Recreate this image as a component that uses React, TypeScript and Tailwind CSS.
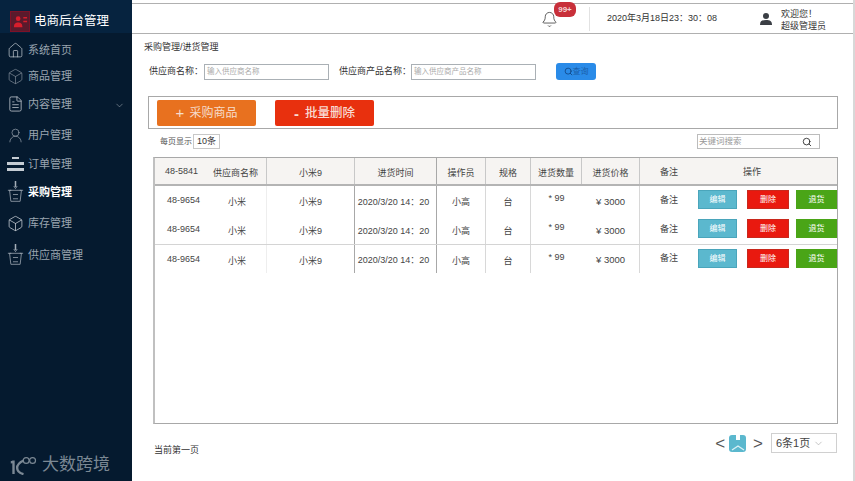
import { Bell, Search, ChevronDown, Box, House, FileText, UserRound } from 'lucide-react';
import type { ReactNode } from 'react';

const font = "font-['Liberation_Sans','Noto_Sans_CJK_SC',sans-serif]";

function TrayIcon({ className = '' }: { className?: string }) {
  return (
    <svg viewBox="0 0 20 26" className={className} fill="none" stroke="currentColor" strokeWidth="0.9">
      <path d="M3 11h14l-1.5 13h-11z" />
      <path d="M1 11h4M15 11h4M7 16h6M7 21h6" />
      <path d="M10 0v7" strokeWidth="1.8" />
      <path d="M8 6l2 3 2-3" />
    </svg>
  );
}

function BarsIcon() {
  return (
    <div className="flex w-[17px] flex-col gap-[3px]">
      <div className="mx-auto h-[2px] w-[7px] bg-[#c5ccd3]" />
      <div className="h-[3px] w-full bg-[#c5ccd3]" />
      <div className="h-[3px] w-full bg-[#c5ccd3]" />
    </div>
  );
}

const menu: { label: string; icon: ReactNode; h: string; active?: boolean; arrow?: boolean }[] = [
  { label: '系统首页', icon: <House className="h-[21px] w-[20px]" strokeWidth={1} />, h: 'h-[26px]' },
  { label: '商品管理', icon: <Box className="h-[19px] w-[19px] text-[#7f8b97]" strokeWidth={1} />, h: 'h-[26px]' },
  { label: '内容管理', icon: <FileText className="h-[20px] w-[19px]" strokeWidth={1.1} />, h: 'h-[30px]', arrow: true },
  { label: '用户管理', icon: <UserRound className="h-[21px] w-[21px] text-[#a5afb9]" strokeWidth={0.9} />, h: 'h-[32px]' },
  { label: '订单管理', icon: <BarsIcon />, h: 'h-[26px]' },
  { label: '采购管理', icon: <TrayIcon className="h-[22px] w-[17px] text-[#a5afb9]" />, h: 'h-[30px]', active: true },
  { label: '库存管理', icon: <Box className="h-[19px] w-[19px]" strokeWidth={1.1} />, h: 'h-[32px]' },
  { label: '供应商管理', icon: <TrayIcon className="h-[22px] w-[17px] text-[#a5afb9]" />, h: 'h-[32px]' },
];

const cols = 'grid grid-cols-[50px_62px_88px_82px_49px_45px_51px_58px_58px_1fr]';
const rowLine = 'border-r border-[#c8c8c8]';

function Row({ border }: { border?: boolean }) {
  return (
    <div className={`${cols} h-[29px] items-stretch text-[9px] text-[#444] ${border ? 'border-t border-[#d4d4d4]' : ''}`}>
      <div className="pt-[8px] pl-[12px] text-[9px]">48-9654</div>
      <div className="flex items-center justify-center border-r border-[#eeeeee] pt-[5px] pl-[3px]">小米</div>
      <div className="flex items-center justify-center border-r border-[#a8a8a8] pt-[5px]">小米9</div>
      <div className="flex items-center justify-center border-r border-[#a8a8a8] pt-[4px] pr-[4px] text-[9px]">2020/3/20 14：20</div>
      <div className="flex items-center justify-center border-r border-[#d8d8d8] pt-[5px]">小高</div>
      <div className="flex items-center justify-center border-r border-[#d8d8d8] pt-[5px]">台</div>
      <div className="pt-[6px] text-center">* 99</div>
      <div className="flex items-center justify-center border-r border-[#d8d8d8] pt-[3px] text-[9.5px]">¥ 3000</div>
      <div className="flex items-center justify-center text-[9px]">备注</div>
      <div className="flex items-start gap-[10px] pt-[4px] text-[8px] text-white">
        <button className="h-[19px] w-[39px] border border-[#4aa5bb] bg-[#5bb8ce]">编辑</button>
        <button className="h-[19px] w-[42px] border border-[#c9281c] bg-[#e9190f]">删除</button>
        <button className="ml-[-3px] h-[19px] flex-1 bg-[#4aa517]">退货</button>
      </div>
    </div>
  );
}

export default function App() {
  return (
    <div className={`flex h-[481px] w-[855px] overflow-hidden bg-white ${font}`}>
      <aside className="flex w-[132px] shrink-0 flex-col bg-[#051a2f] text-[11px] text-[#9aa5b0]">
        <div className="flex h-[33px] items-center gap-[4px] bg-[#06233f] pt-[10px] pl-[10px] text-[12.5px] text-white">
          <div className="flex h-[21px] w-[20px] items-center justify-center border border-[#7d1228] bg-[#5a1a2c]">
            <svg viewBox="0 0 16 16" className="h-[15px] w-[15px]">
              <circle cx="5.5" cy="5" r="2.5" fill="#d81e2c" />
              <path d="M1 14c0-4 2-5 4.5-5S10 10 10 14z" fill="#d81e2c" />
              <path d="M11 4h4M11 8h4" stroke="#d81e2c" strokeWidth="1.5" />
            </svg>
          </div>
          电商后台管理
        </div>
        <nav className="mt-[4px] flex flex-col">
          {menu.map((m) => (
            <div key={m.label} className={`${m.h} flex items-center gap-[3px] pl-[7px] ${m.active ? 'font-bold text-white' : ''}`}>
              <span className="flex w-[17px] justify-center text-[#c5ccd3]">{m.icon}</span>
              <span className="ml-[1px]">{m.label}</span>
              {m.arrow && <ChevronDown className="mt-[3px] ml-auto mr-[7px] h-[11px] w-[11px] text-[#c5ccd3]" strokeWidth={1} />}
            </div>
          ))}
        </nav>
        <div className="mt-auto flex items-center gap-[4px] pb-[5px] pl-[9px] text-[17px] leading-[22px] text-[#7b8894]">
          <svg viewBox="0 0 30 22" className="h-[20px] w-[29px]" fill="none" stroke="currentColor">
            <path d="M1 8c2 0 3-1 3-2v15" strokeWidth="2.6" />
            <path d="M15 6c-4 2-7 5-7 8 0 4 3 6 7 7" strokeWidth="2.6" />
            <circle cx="18" cy="6" r="3.2" strokeWidth="1.3" />
            <circle cx="25" cy="6" r="3.2" strokeWidth="1.3" />
          </svg>
          大数跨境
        </div>
      </aside>

      <main className="flex min-w-0 flex-1 flex-col border-r-[2px] border-[#d8d8d8] pt-[3px]">
        <header className="flex h-[31px] shrink-0 items-center border-y border-[#b0b0b0] text-[9px] text-[#333]">
          <div className="relative mt-[2px] ml-[409px]">
            <Bell className="h-[17px] w-[17px] text-[#222]" strokeWidth={1} />
            <span className="absolute left-[13px] top-[-9px] flex h-[15px] w-[22px] items-center justify-center rounded-[6px] bg-[#c8303a] text-[8px] font-bold text-[#f5d5d5]">99+</span>
          </div>
          <div className="ml-[31px] h-[24px] w-px bg-[#e2e2e2]" />
          <span className="ml-[17px] text-[9px]">2020年3月18日23：30：08</span>
          <svg viewBox="0 0 14 14" className="ml-[42px] h-[14px] w-[14px]" fill="#3b3f45">
            <circle cx="7" cy="4" r="3" />
            <path d="M1 13c0-4 2-5 6-5s6 1 6 5z" />
          </svg>
          <div className="ml-[8px] mt-[2px] leading-[12px]">
            欢迎您！
            <br />
            超级管理员
          </div>
        </header>

        <div className="flex min-h-0 flex-1 flex-col text-[#333]">
          <div className="mt-[6px] ml-[12px] text-[9px] leading-[14px]">采购管理/进货管理</div>

          <div className="mt-[9px] ml-[17px] flex h-[17px] items-center text-[9px]">
            <span className="w-[55px]">供应商名称：</span>
            <div className="flex h-[16px] w-[125px] items-center border border-[#aab0b5] px-[2px] text-[7.5px] text-[#aaa]">输入供应商名称</div>
            <span className="ml-[10px] w-[72px]">供应商产品名称：</span>
            <div className="flex h-[16px] w-[125px] items-center border border-[#aab0b5] px-[2px] text-[7.5px] text-[#aaa]">输入供应商产品名称</div>
            <button className="ml-[20px] flex h-[17px] w-[40px] items-center justify-center rounded-[3px] bg-[#2a8be8] text-[8px] text-[#1a5fa8]">
              <Search className="h-[9px] w-[9px] text-[#0d3f7a]" strokeWidth={2} />
              查询
            </button>
          </div>

          <div className="mt-[16px] ml-[16px] flex h-[33px] w-[690px] items-center gap-[19px] border border-[#a8a8a8] pl-[8px] text-[12px] text-[#f6dccb]">
            <button className="flex h-[26px] w-[99px] items-center justify-center gap-[5px] rounded-[2px] bg-[#e8711f]">
              <span className="text-[15px] leading-none">+</span>采购商品
            </button>
            <button className="flex h-[26px] w-[99px] items-center justify-center gap-[6px] rounded-[2px] bg-[#e8300e] pt-[2px] text-[12.5px] font-medium text-[#f9dcd4]">
              <span className="text-[15px] leading-none font-bold">-</span>
              批量删除
            </button>
          </div>

          <div className="mt-[5px] ml-[28px] flex h-[15px] w-[660px] items-center text-[8px] text-[#555]">
            <span className="w-[33px]">每页显示</span>
            <div className="flex h-[15px] w-[27px] items-center justify-center border border-[#c8c8c8] text-[9px] text-[#333]">10条</div>
            <div className="ml-auto flex h-[15px] w-[123px] items-center justify-between border border-[#bcbcbc] pr-[7px] pl-[1px] text-[8.5px] text-[#999]">
              关键词搜索
              <Search className="h-[10px] w-[10px] text-[#222]" strokeWidth={2} />
            </div>
          </div>

          <div className="mt-[8px] ml-[21px] flex h-[267px] w-[685px] flex-col border border-l-[2px] border-[#a8a8a8] border-l-[#c0c0c0]">
            <div className={`${cols} h-[28px] shrink-0 border-b-[2px] border-[#b4b4b4] bg-[#f6f4f2] text-[9px] text-[#444]`}>
              <div className="pt-[7px] pl-[10px]">48-5841</div>
              <div className={`flex items-center justify-center ${rowLine} pt-[5px]`}>供应商名称</div>
              <div className={`flex items-center justify-center ${rowLine} pt-[5px]`}>小米9</div>
              <div className="flex items-center justify-center border-r border-[#a8a8a8] pt-[5px]">进货时间</div>
              <div className={`flex items-center justify-center ${rowLine} pt-[5px]`}>操作员</div>
              <div className={`flex items-center justify-center ${rowLine} pt-[5px]`}>规格</div>
              <div className={`flex items-center justify-center ${rowLine} pt-[5px]`}>进货数量</div>
              <div className={`flex items-center justify-center ${rowLine} pt-[5px]`}>进货价格</div>
              <div className="flex items-center justify-center pt-[3px]">备注</div>
              <div className="flex items-center justify-center pt-[3px] pr-[31px]">操作</div>
            </div>
            <Row />
            <Row />
            <Row border />
          </div>

          <div className="flex flex-1 items-start pr-[16px] pl-[22px]">
            <span className="mt-[20px] text-[9px]">当前第一页</span>
            <div className="mt-[9px] ml-auto flex items-center text-[#555]">
              <span className="text-[17px] leading-none">&lt;</span>
              <div className="ml-[4px] flex h-[17px] w-[17px] items-center justify-center rounded-[3px] bg-[#5bb8ce]">
                <svg viewBox="0 0 16 16" className="h-[16px] w-[16px]" fill="none" stroke="#d9f0f5" strokeWidth="1.4">
                  <path d="M2 15l6-4 6 4" />
                  <path d="M6 0v5h4V0" fill="#ffffff" stroke="none" />
                </svg>
              </div>
              <span className="ml-[7px] text-[17px] leading-none">&gt;</span>
              <div className="ml-[8px] flex h-[20px] w-[66px] items-center gap-[3px] border border-[#d0d0d0] pl-[4px] text-[11px] text-[#444]">
                6条1页
                <ChevronDown className="h-[11px] w-[11px] text-[#999]" strokeWidth={1.2} />
              </div>
            </div>
          </div>
        </div>
      </main>
    </div>
  );
}
